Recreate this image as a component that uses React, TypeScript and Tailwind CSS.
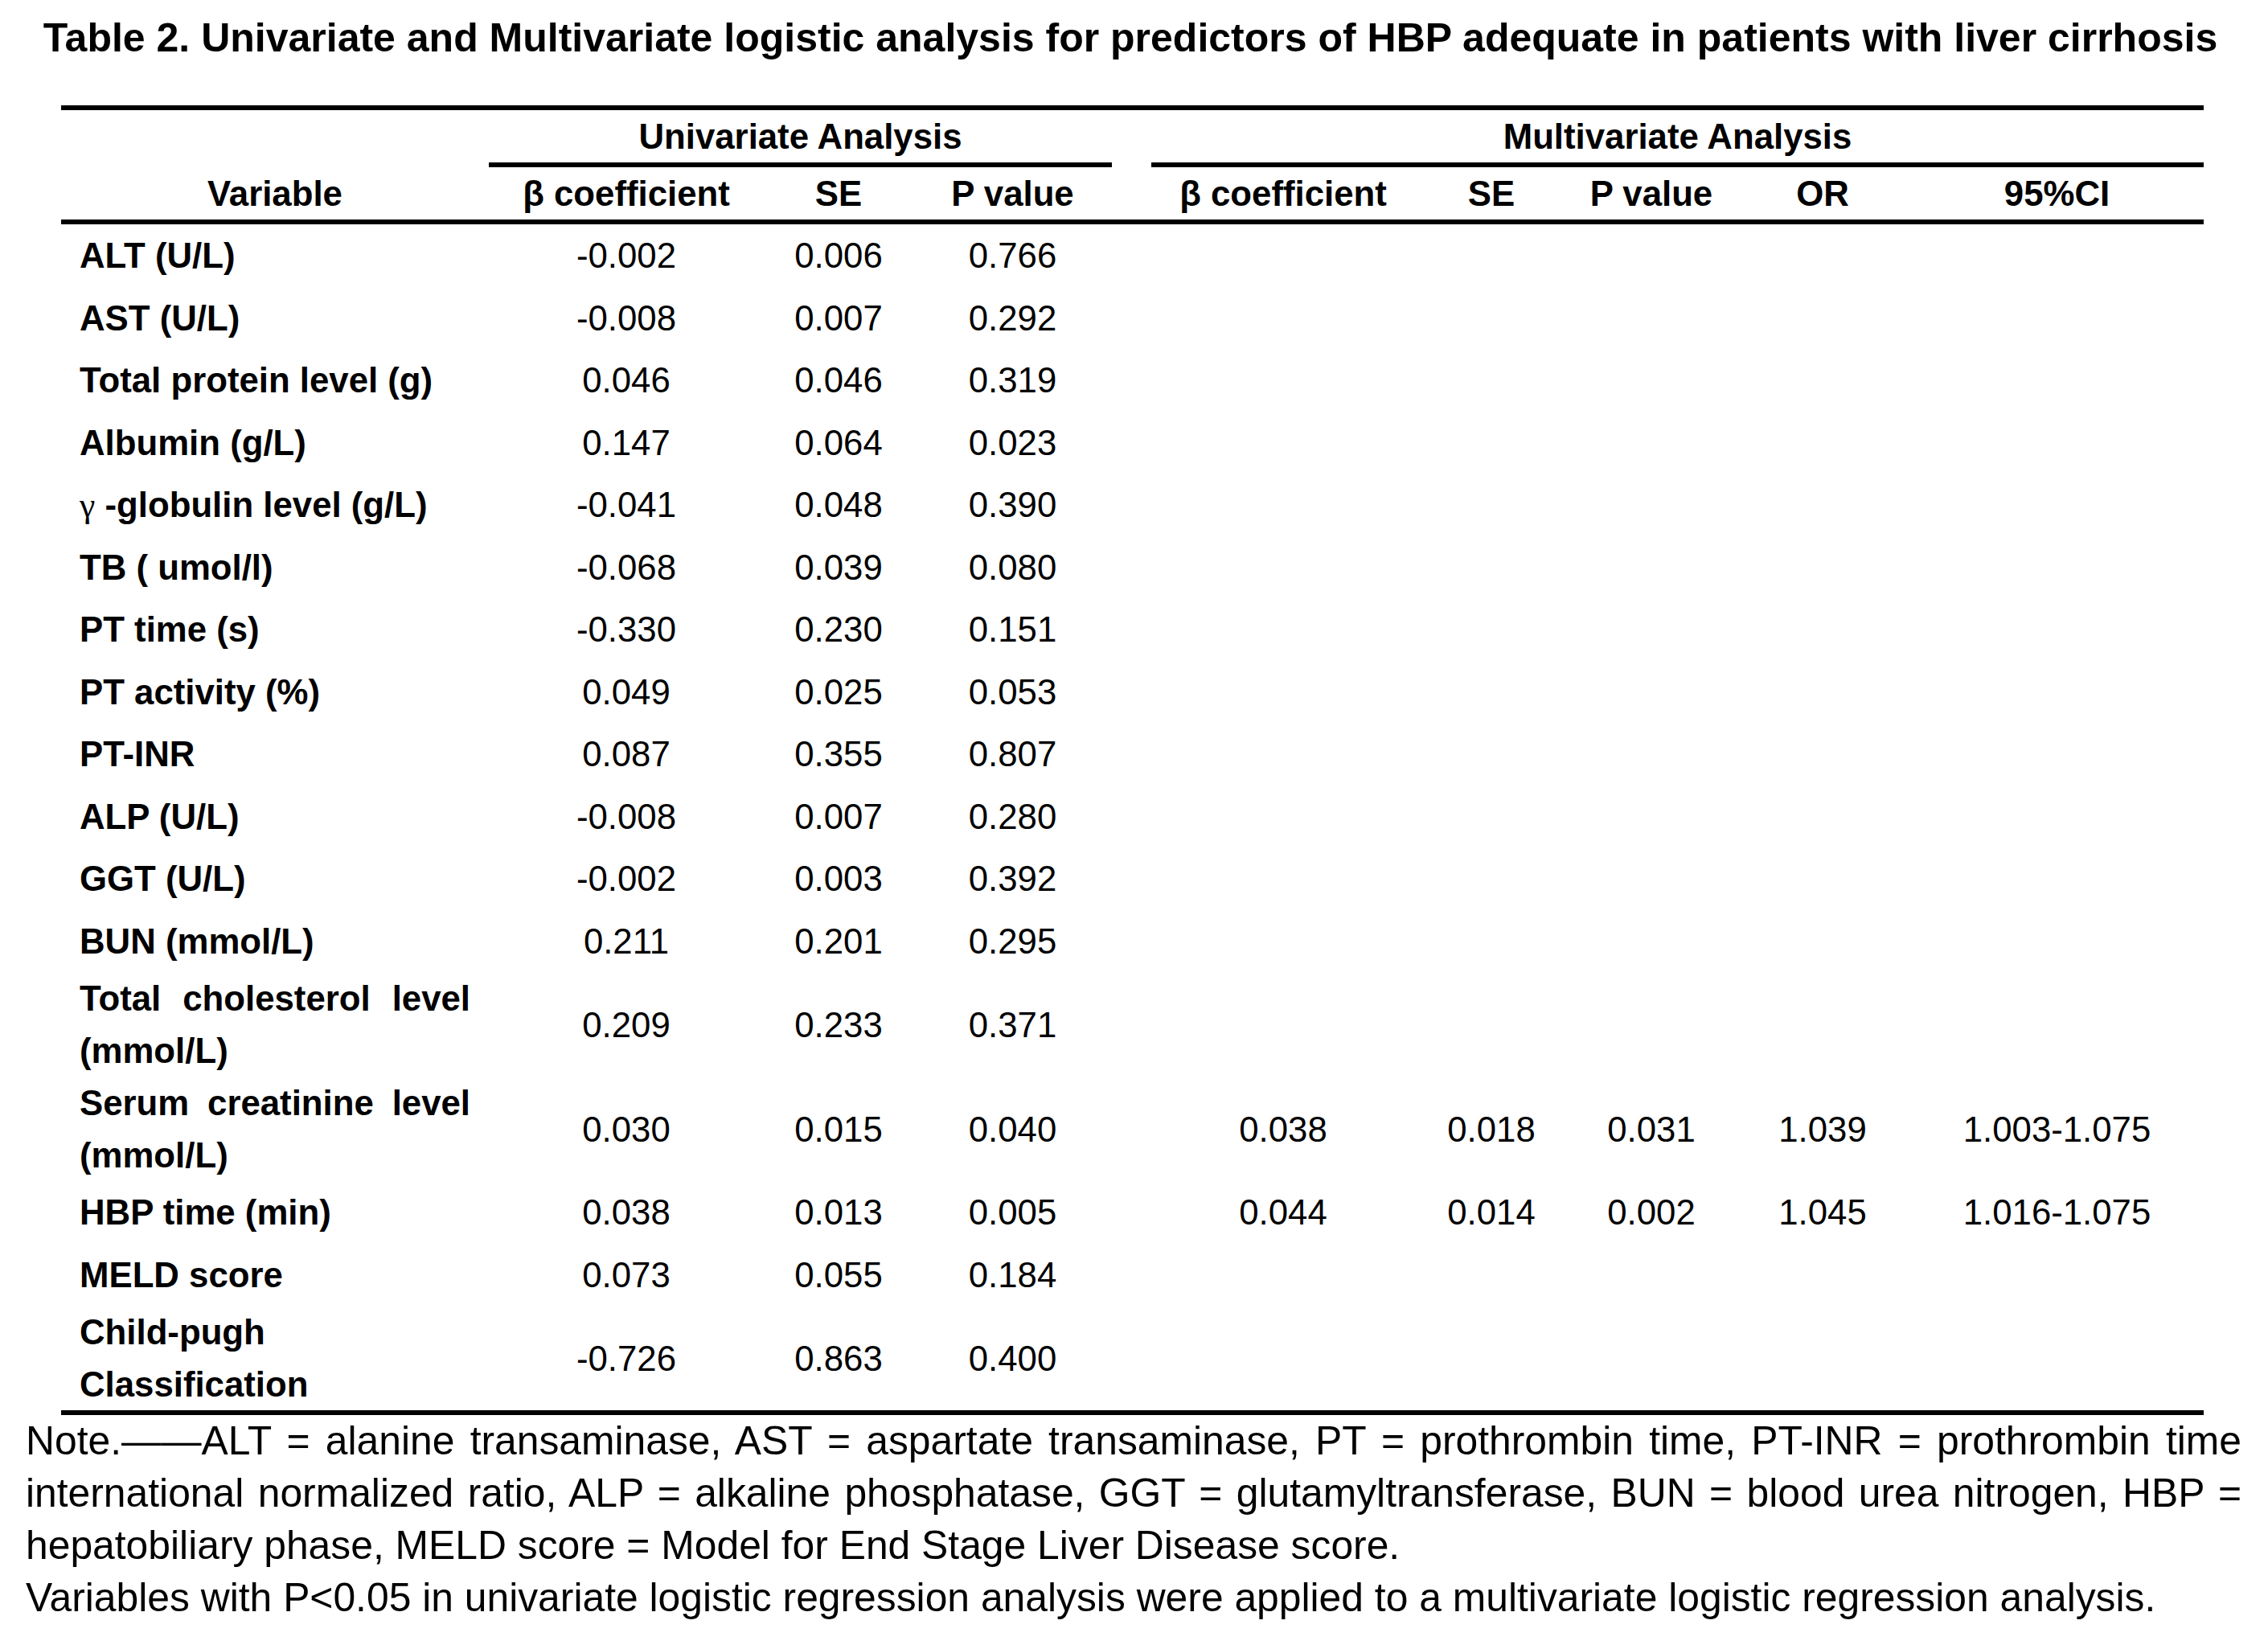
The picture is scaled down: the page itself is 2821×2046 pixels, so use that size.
import React from "react";

type Row = {
  name: React.ReactNode;
  uni: [string, string, string];
  multi?: [string, string, string, string, string];
  tall?: boolean;
};

const rows: Row[] = [
  { name: "ALT (U/L)", uni: ["-0.002", "0.006", "0.766"] },
  { name: "AST (U/L)", uni: ["-0.008", "0.007", "0.292"] },
  { name: "Total protein level (g)", uni: ["0.046", "0.046", "0.319"] },
  { name: "Albumin (g/L)", uni: ["0.147", "0.064", "0.023"] },
  {
    name: (
      <>
        <span className="font-['Liberation_Serif',serif] font-normal">γ</span> -globulin level (g/L)
      </>
    ),
    uni: ["-0.041", "0.048", "0.390"],
  },
  { name: "TB ( umol/l)", uni: ["-0.068", "0.039", "0.080"] },
  { name: "PT time (s)", uni: ["-0.330", "0.230", "0.151"] },
  { name: "PT activity (%)", uni: ["0.049", "0.025", "0.053"] },
  { name: "PT-INR", uni: ["0.087", "0.355", "0.807"] },
  { name: "ALP (U/L)", uni: ["-0.008", "0.007", "0.280"] },
  { name: "GGT (U/L)", uni: ["-0.002", "0.003", "0.392"] },
  { name: "BUN (mmol/L)", uni: ["0.211", "0.201", "0.295"] },
  { name: "Total cholesterol level (mmol/L)", uni: ["0.209", "0.233", "0.371"], tall: true },
  {
    name: "Serum creatinine level (mmol/L)",
    uni: ["0.030", "0.015", "0.040"],
    multi: ["0.038", "0.018", "0.031", "1.039", "1.003-1.075"],
    tall: true,
  },
  {
    name: "HBP time (min)",
    uni: ["0.038", "0.013", "0.005"],
    multi: ["0.044", "0.014", "0.002", "1.045", "1.016-1.075"],
  },
  { name: "MELD score", uni: ["0.073", "0.055", "0.184"] },
  { name: "Child-pugh Classification", uni: ["-0.726", "0.863", "0.400"], tall: true },
];

export default function App() {
  return (
    <div className="min-h-screen w-full bg-white text-black font-['Liberation_Sans',Arial,sans-serif]">
      {/* Title */}
      <h1 className="pt-[15px] pr-[9px] text-center text-[50px] font-bold leading-[65px]">
        Table 2. Univariate and Multivariate logistic analysis for predictors of HBP adequate in patients with liver cirrhosis
      </h1>

      <table className="ml-[76px] mt-[51px] w-[2665px] table-fixed border-separate border-spacing-0 text-[43.75px] leading-[65px]">
        <colgroup>
          <col className="w-[532px]" />
          <col className="w-[342px]" />
          <col className="w-[186px]" />
          <col className="w-[247px]" />
          <col className="w-[49px]" />
          <col className="w-[328px]" />
          <col className="w-[190px]" />
          <col className="w-[208px]" />
          <col className="w-[218px]" />
          <col className="w-[365px]" />
        </colgroup>
        <thead>
          <tr className="h-[77px]">
            <th className="border-t-[6px] border-black p-0" />
            <th colSpan={3} className="border-t-[6px] border-b-[6px] border-black p-0 text-center font-bold">
              Univariate Analysis
            </th>
            <th className="border-t-[6px] border-black p-0" />
            <th colSpan={5} className="border-t-[6px] border-b-[6px] border-black p-0 text-center font-bold">
              Multivariate Analysis
            </th>
          </tr>
          <tr className="h-[71px]">
            {["Variable", "β coefficient", "SE", "P value", "", "β coefficient", "SE", "P value", "OR", "95%CI"].map(
              (h, i) => (
                <th key={i} className="border-b-[6px] border-black p-0 text-center font-bold whitespace-nowrap">
                  {h}
                </th>
              )
            )}
          </tr>
        </thead>
        <tbody>
          {rows.map((r, i) => {
            const last = i === rows.length - 1;
            const b = last ? "border-b-[6px] border-black" : "";
            const h = r.tall ? (last ? "h-[136px]" : "h-[130px]") : "h-[77.5px]";
            const multi = r.multi ?? ["", "", "", "", ""];
            return (
              <tr key={i} className={h}>
                <td className={`${b} p-0 pl-[23px] pr-[23px] text-justify font-bold`}>{r.name}</td>
                {r.uni.map((v, j) => (
                  <td key={j} className={`${b} p-0 text-center`}>
                    {v}
                  </td>
                ))}
                <td className={`${b} p-0`} />
                {multi.map((v, j) => (
                  <td key={j} className={`${b} p-0 text-center whitespace-nowrap`}>
                    {v}
                  </td>
                ))}
              </tr>
            );
          })}
        </tbody>
      </table>

      {/* Note */}
      <div className="pl-[32px] pr-[33px] text-[49.8px] leading-[65px]">
        <p className="text-justify [text-align-last:justify]">
          Note.——ALT = alanine transaminase, AST = aspartate transaminase, PT = prothrombin time, PT-INR = prothrombin time
        </p>
        <p className="text-justify [text-align-last:justify]">
          international normalized ratio, ALP = alkaline phosphatase, GGT = glutamyltransferase, BUN = blood urea nitrogen, HBP =
        </p>
        <p>hepatobiliary phase, MELD score = Model for End Stage Liver Disease score.</p>
        <p>Variables with P&lt;0.05 in univariate logistic regression analysis were applied to a multivariate logistic regression analysis.</p>
      </div>
    </div>
  );
}
